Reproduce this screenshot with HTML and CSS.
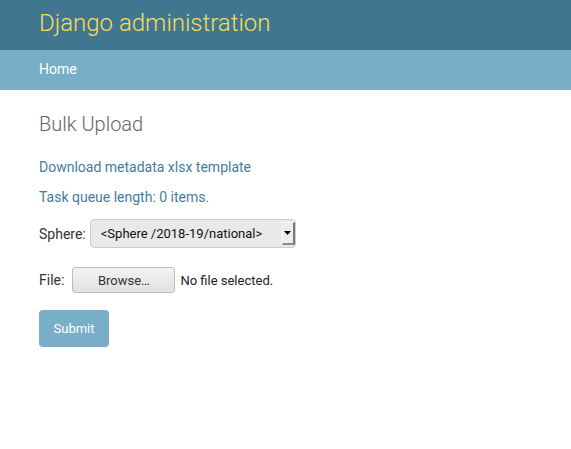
FILE: index.html
```html
<!DOCTYPE html>
<html lang="en">
<head>
<meta charset="utf-8">
<title>Bulk Upload | Django site admin</title>
<link rel="stylesheet" href="styles.css">
</head>
<body>
<div class="header">
  <h1 class="branding">Django administration</h1>
</div>
<div class="breadcrumbs"><a href="#">Home</a></div>
<div class="content">
  <h1 class="title">Bulk Upload</h1>
  <p class="line"><a href="#">Download metadata xlsx template</a></p>
  <p class="line"><a href="#">Task queue length: 0 items.</a></p>
  <form class="form">
    <div class="row sphere-row">
      <label class="label" for="sphere">Sphere:</label>
      <div class="select-wrap">
        <select id="sphere" class="select">
          <option>&lt;Sphere /2018-19/national&gt;</option>
        </select>
        <span class="select-arrow">
          <svg width="7" height="4" viewBox="0 0 7 4"><path d="M0 0H7L3.5 4Z" fill="#000"/></svg>
        </span>
      </div>
    </div>
    <div class="row file-row">
      <label class="label">File:</label>
      <button type="button" class="browse">Browse…</button>
      <span class="nofile">No file selected.</span>
    </div>
    <div class="submit-row">
      <button type="button" class="submit">Submit</button>
    </div>
  </form>
</div>
</body>
</html>
```

FILE: styles.css
```css
html, body {
  margin: 0;
  padding: 0;
  background: #fff;
}
body {
  font-family: Roboto, "Liberation Sans", sans-serif;
  font-size: 14px;
  color: #333;
}
a {
  color: #447e9b;
  text-decoration: none;
}
.header {
  box-sizing: border-box;
  height: 50px;
  padding: 10px 39px 0;
  background: #417690;
}
.branding {
  margin: 0;
  font-size: 24px;
  line-height: 26px;
  font-weight: 300;
  color: #f5dd5d;
}
.breadcrumbs {
  box-sizing: border-box;
  height: 40px;
  padding: 9px 39px 11px;
  line-height: 20px;
  background: #79aec8;
  font-size: 14px;
}
.breadcrumbs a {
  color: #fff;
}
.content {
  padding: 22px 39px 20px;
}
.title {
  margin: 0 0 21px;
  font-size: 20px;
  line-height: 24px;
  font-weight: 300;
  color: #666;
}
.line {
  margin: 0 0 10px;
  line-height: 20px;
}
.form {
  margin: 0;
  padding-top: 2px;
}
.row {
  display: flex;
  align-items: center;
}
.sphere-row {
  gap: 4px;
}
.file-row {
  margin-top: 19px;
  gap: 0;
}
.label {
  color: #333;
  font-size: 14px;
}
.select-wrap {
  position: relative;
  display: flex;
}
.select {
  -webkit-appearance: none;
  appearance: none;
  box-sizing: border-box;
  width: 206px;
  height: 29px;
  margin: 0;
  padding: 0 0 0 10px;
  border: 1px solid #cdcdcd;
  border-radius: 4px;
  background: #e9e9e9;
  font-family: Roboto, "Liberation Sans", sans-serif;
  font-size: 13px;
  color: #111;
  outline: none;
}
.select-arrow {
  position: absolute;
  top: 3px;
  right: 1px;
  box-sizing: border-box;
  width: 13px;
  height: 23px;
  display: flex;
  align-items: center;
  justify-content: center;
  background: #ececec;
  border-left: 1px solid #f8f8f8;
  border-top: 1px solid #f8f8f8;
  border-right: 2px solid #777;
  border-bottom: 2px solid #8a8a8a;
}
.browse {
  box-sizing: border-box;
  width: 103px;
  height: 26px;
  margin: 0 5px 0 8px;
  padding: 0;
  border: 1px solid #bdbdbd;
  border-radius: 3px;
  background: linear-gradient(#f3f3f3, #e1e1e1);
  font-family: Roboto, "Liberation Sans", sans-serif;
  font-size: 13px;
  color: #333;
}
.nofile {
  font-size: 13px;
  color: #222;
}
.submit-row {
  margin-top: 17px;
}
.submit {
  box-sizing: border-box;
  width: 70px;
  height: 37px;
  padding: 0;
  border: none;
  border-radius: 4px;
  background: #79aec8;
  color: #fff;
  font-family: Roboto, "Liberation Sans", sans-serif;
  font-size: 13px;
}
```
